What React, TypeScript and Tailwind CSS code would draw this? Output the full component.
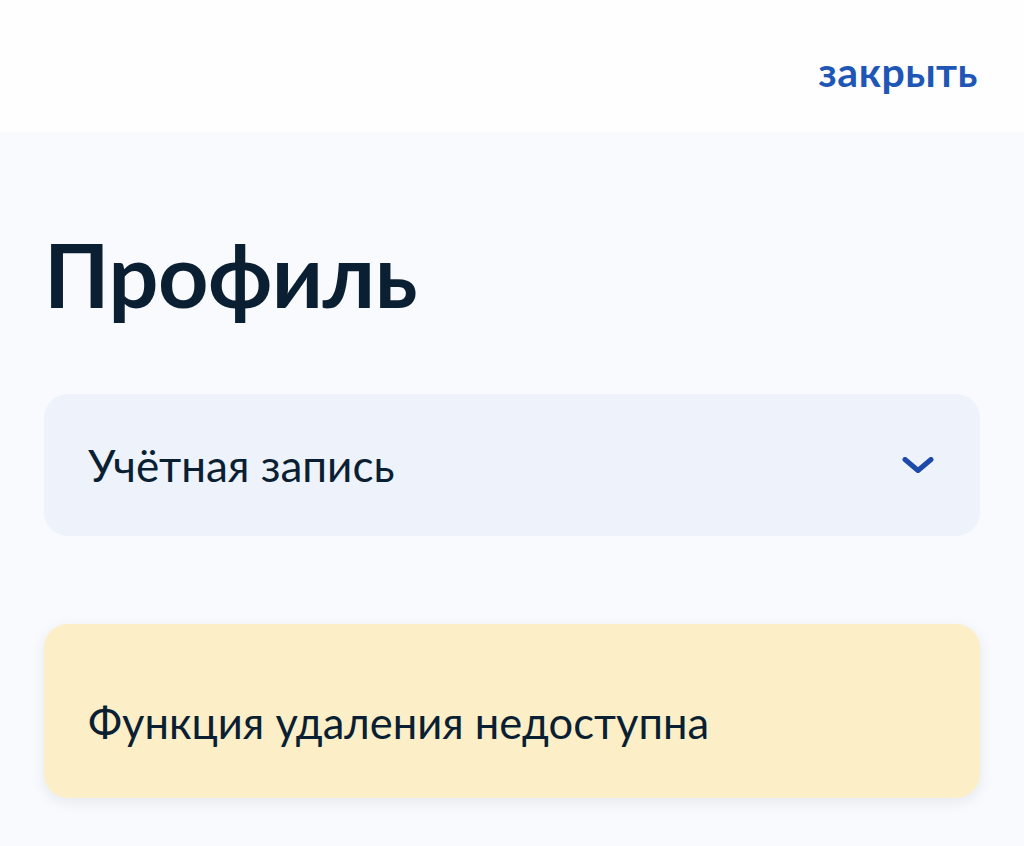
const font = { fontFamily: "Lato, 'Noto Sans', sans-serif" };

const App = () => {
  return (
    <div className="w-[1024px] h-[846px] bg-[#f8fafd] overflow-hidden" style={font}>
      <header className="h-[132px] bg-[#fefefe] flex items-start justify-end pr-[46px] pt-[46px]">
        <span className="text-[41px] leading-[52px] font-bold text-[#1e57b5] tracking-[0.5px]">закрыть</span>
      </header>
      <main className="px-[44px]">
        <h1 className="mt-[92px] text-[88px] leading-[100px] font-bold text-[#0b1f33] tracking-[-0.5px]">
          Профиль
        </h1>
        <div className="mt-[70px] h-[142px] rounded-[24px] bg-[#edf2fb] flex items-center justify-between pl-[44px] pr-[46px]">
          <span className="text-[44px] text-[#0b1f33]">Учётная запись</span>
          <svg width="32" height="16" viewBox="0 0 32 16" fill="none">
            <path d="M3 2.5 L16 13.5 L29 2.5" stroke="#1d4aa8" strokeWidth="5" strokeLinecap="round" strokeLinejoin="round" />
          </svg>
        </div>
        <div className="mt-[88px] h-[174px] rounded-[24px] bg-[#fcefc8] shadow-[0_4px_14px_rgba(11,31,51,0.08)] flex items-center pl-[44px] pt-[24px]">
          <span className="text-[43.5px] text-[#0b1f33]">Функция удаления недоступна</span>
        </div>
      </main>
    </div>
  );
};

export default App;
